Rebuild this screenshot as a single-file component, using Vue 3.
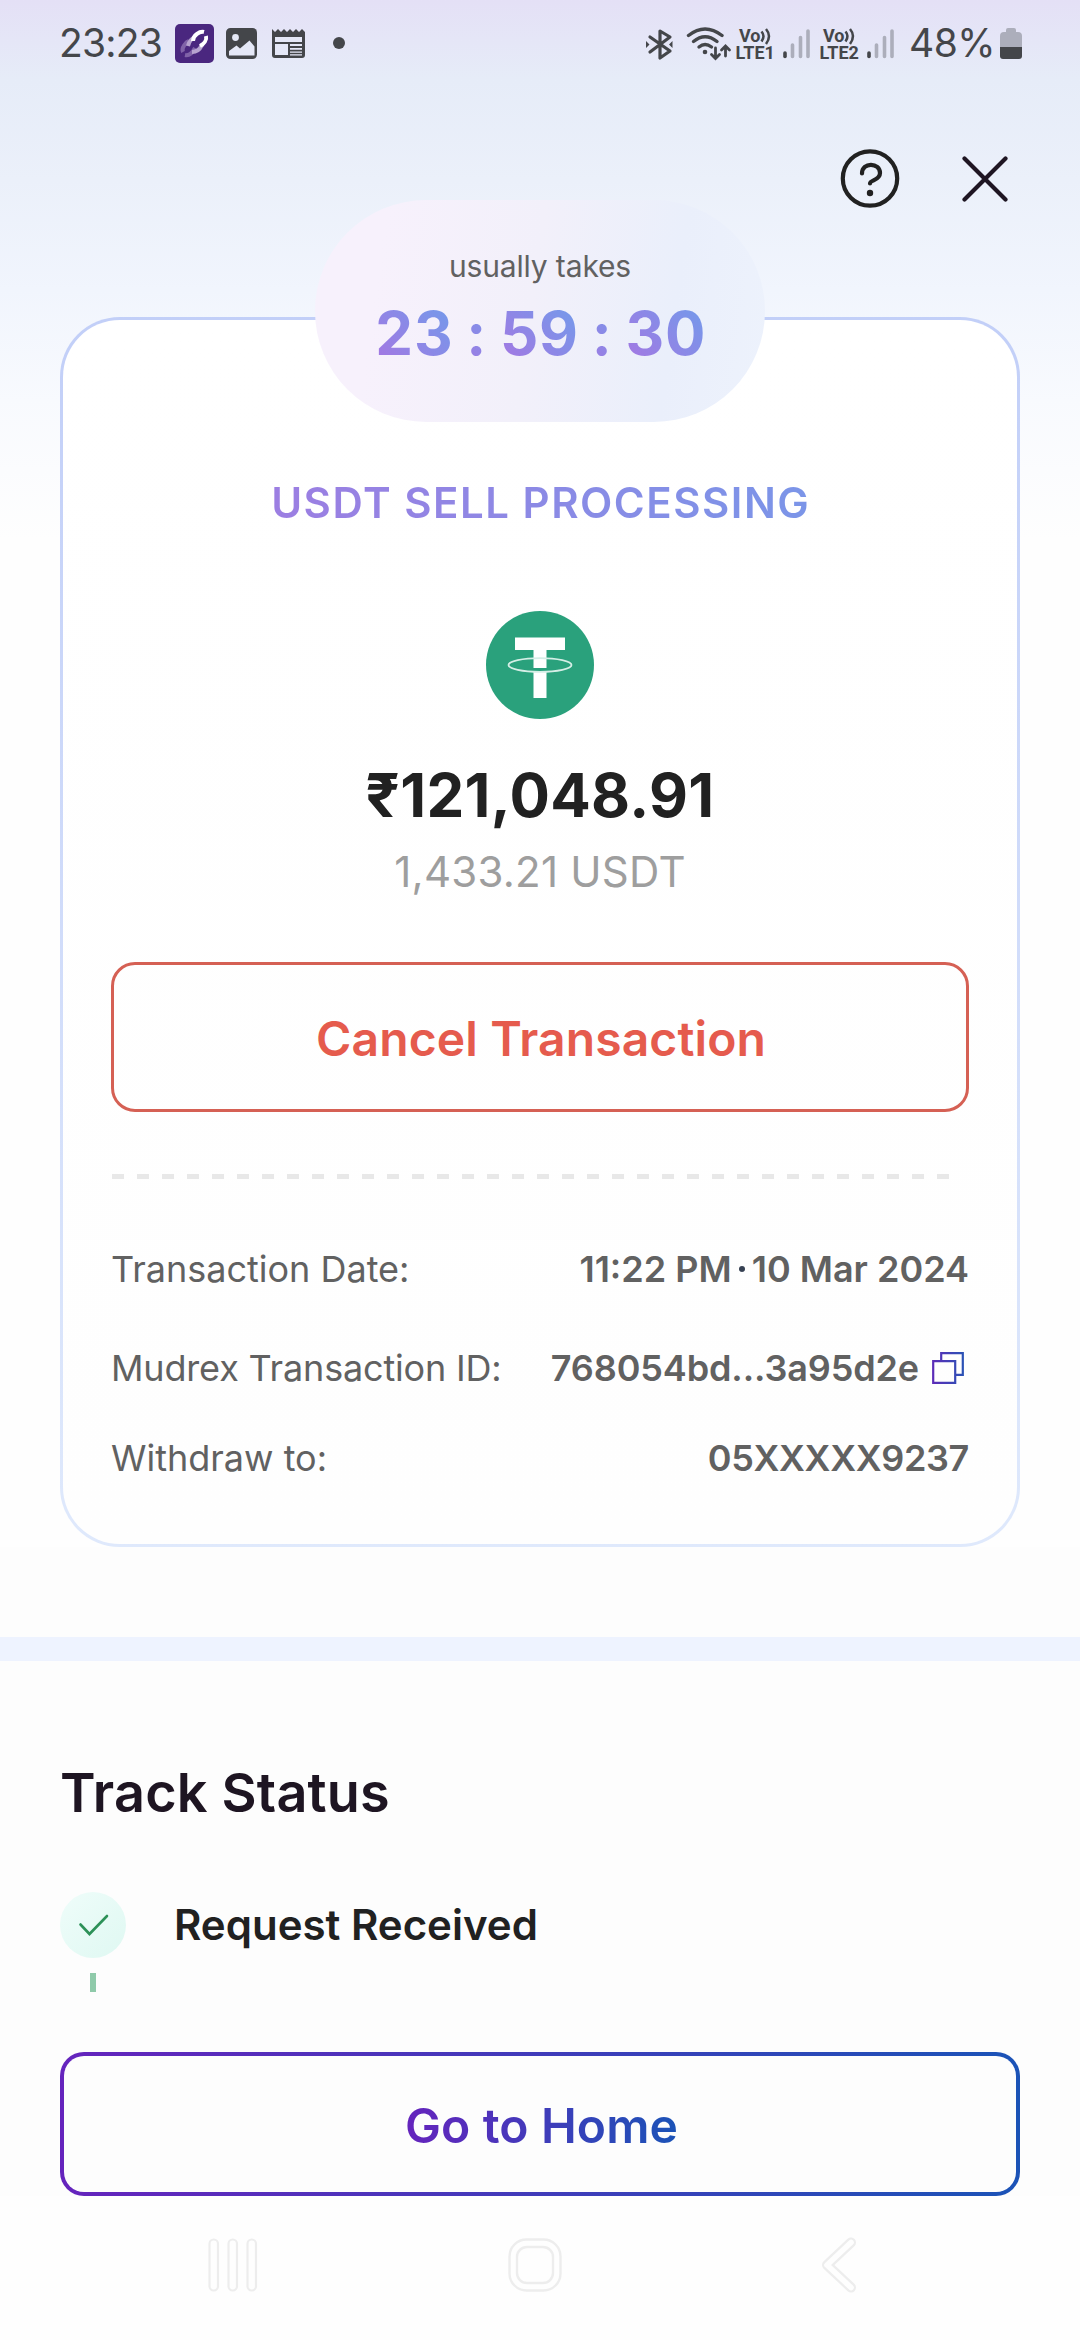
<script setup>
const dashes = 34
const timer = ['23', ':', '59', ':', '30']
</script>

<template>
  <main class="screen">
    <header class="status">
      <span class="clock">23:23</span>
      <svg class="app" width="39" height="39" viewBox="0 0 39 39">
        <rect width="39" height="39" rx="5" fill="#4a277f" />
        <g fill="none" stroke-width="4" stroke-linecap="butt">
          <path d="M8 28 C6 24 11 18 14 17 M10 31 C15 32 18 28 20 24" stroke="#8063a8" />
          <path d="M13 22 C14 17 18 13 20 14 M17 28 C22 28 25 25 27 21" stroke="#b6a3cf" />
          <path d="M18 17 C18 11 25 7 29 8 M31 12 C32 16 29 20 25 22" stroke="#fff" />
        </g>
      </svg>
      <svg class="pic" width="31" height="31" viewBox="0 0 31 31">
        <rect width="31" height="31" rx="4.5" fill="#44464a" />
        <circle cx="9.5" cy="9.5" r="3.4" fill="#e5e8f7" />
        <path d="M3 27.500v-4.500l7.500-5.500 3.500 3 9.500-8 5 6v9z" fill="#e5e8f7" />
      </svg>
      <svg class="news" width="33" height="31" viewBox="0 0 33 31">
        <path d="M0 1l3 3 3-3 3 3 3-3 3 3 3-3 3 3 3-3 3 3 3-3 3 3V27q0 3-3 3H3q-3 0-3-3z" fill="#44464a" />
        <path d="M3 9h27v5H3zM3 16h13v11H3zM18 16h12v2H18zM18 20h12v1.8H18zM18 23.5h12v1.3H18zM18 26.3h12v1.2H18z" fill="#e5e8f7" />
      </svg>
      <i class="more"></i>
      <svg class="radios" width="280" height="36" viewBox="645 26 280 36" fill="none" stroke="#44464a">
        <g stroke-width="3.2" stroke-linecap="round" stroke-linejoin="round">
          <path d="M650 37l20 14-10 7V31l10 6-20 15" />
        </g>
        <path d="M646 41l3.5 3.5-3.5 3.5zM672.500 41l-3.500 3.500 3.500 3.500z" fill="#44464a" stroke="none" />
        <g stroke-width="3.400" stroke-linecap="round">
          <path d="M688.500 35.500Q705 22.500 722 35.500" />
          <path d="M693.500 41.500Q705 32 717 41.500" />
          <path d="M699 47Q705 42 711.500 47" />
          <path d="M715.500 48v10M711.500 54.500l4 4 4-4M725.500 56V46.500M721.500 50l4-4 4 4" stroke-width="2.800" />
        </g>
        <circle cx="705" cy="52" r="2.300" fill="#44464a" stroke="none" />
        <g v-for="(dx, i) in [0, 84]" :key="i" :transform="`translate(${dx} 0)`">
          <text x="739" y="42" class="lte">Vo</text>
          <path d="M761.500 31.500q4 4.500 0 10M766 29q6 7 0 15" stroke-width="2.500" />
          <text x="735.500" y="59" class="lte">LTE{{ i + 1 }}</text>
          <path d="M785 53v3.500" stroke-width="3.600" stroke-linecap="round" />
          <path d="M792.500 45v11.500M800.500 37.500v19M808 31v25.500" stroke="#acaebb" stroke-width="3.600" stroke-linecap="round" />
        </g>
      </svg>
      <span class="pct">48%</span>
      <svg class="battery" width="22" height="32" viewBox="0 0 22 32">
        <path d="M6 4V2q0-2 2-2h6q2 0 2 2v2h2q4 0 4 4v12H0V8q0-4 4-4z" fill="#acaebb" />
        <path d="M0 19h22v9q0 3-3 3H3q-3 0-3-3z" fill="#44464a" />
      </svg>
    </header>

    <nav class="actions">
      <svg width="60" height="60" viewBox="0 0 60 60" fill="none" stroke="#212121" stroke-width="4.200" stroke-linecap="round">
        <circle cx="30" cy="29.500" r="27.200" />
        <path d="M22 24.500C22 12.500 40 13.500 40 24c0 7.500-10 7-10 10.500" />
        <circle cx="30" cy="44" r="3.200" fill="#212121" stroke="none" />
      </svg>
      <svg width="46" height="46" viewBox="0 0 46 46" fill="none" stroke="#1e1522" stroke-width="4.200" stroke-linecap="round">
        <path d="M2.500 2.500l41 41M43.500 2.500l-41 41" />
      </svg>
    </nav>

    <section class="card">
      <div class="pill">
        <p class="takes">usually takes</p>
        <p class="timer">
          <span v-for="(p, i) in timer" :key="i" :class="{ colon: p === ':' }">{{ p }}</span>
        </p>
      </div>
      <h1 class="title">USDT SELL PROCESSING</h1>
      <svg class="coin" width="108" height="108" viewBox="0 0 108 108">
        <circle cx="54" cy="54" r="54" fill="#2aa17c" />
        <path d="M29 26.500h50V39H60.500V57h-13V39H29zM47.500 61h13v26h-13z" fill="#fff" />
        <ellipse cx="54" cy="54" rx="31.500" ry="6.800" fill="none" stroke="#d5eee6" stroke-width="1.800" />
      </svg>
      <p class="amount">₹121,048.91</p>
      <p class="units">1,433.21 USDT</p>
      <button class="cancel">Cancel Transaction</button>
      <div class="dashes"><i v-for="n in dashes" :key="n"></i></div>
      <dl class="details">
        <div class="row">
          <dt>Transaction Date:</dt>
          <dd><span>11:22 PM</span><i class="sep"></i><span>10 Mar 2024</span></dd>
        </div>
        <div class="row">
          <dt class="id-label">Mudrex Transaction ID:</dt>
          <dd class="id-value">
            <span>768054bd...3a95d2e</span>
            <svg class="copy" width="32" height="32" viewBox="0 0 32 32" fill="none" stroke="url(#copyInk)" stroke-width="2.200">
              <defs>
                <linearGradient id="copyInk" x1="0" y1="0" x2="32" y2="0" gradientUnits="userSpaceOnUse">
                  <stop offset="0" stop-color="#5d2bb8" /><stop offset="1" stop-color="#2a53b5" />
                </linearGradient>
              </defs>
              <path d="M1.200 9.200h22v21.600h-22zM9.200 10V1.200h21.600v21.600H23" />
            </svg>
          </dd>
        </div>
        <div class="row">
          <dt>Withdraw to:</dt>
          <dd class="account">05XXXXX9237</dd>
        </div>
      </dl>
    </section>

    <section class="lower">
      <div class="band"></div>
      <h2 class="track">Track Status</h2>
      <div class="step">
        <svg width="66" height="66" viewBox="0 0 66 66">
          <defs>
            <linearGradient id="mint" x1="0" y1="0" x2="1" y2="1">
              <stop offset="0" stop-color="#effdfa" /><stop offset="1" stop-color="#dff8f2" />
            </linearGradient>
          </defs>
          <circle cx="33" cy="33" r="33" fill="url(#mint)" />
          <path d="M20.500 32.500l9 9.500 17.500-18" fill="none" stroke="#2d9158" stroke-width="2.600" stroke-linecap="round" />
        </svg>
        <span>Request Received</span>
      </div>
      <div class="link"></div>
      <button class="home"><span>Go to Home</span></button>
    </section>

    <footer class="sysnav">
      <svg width="50" height="54" viewBox="0 0 50 54" fill="none" stroke="#ededed" stroke-width="2.200">
        <rect x="1.500" y="1.500" width="8.500" height="51" rx="4.250" />
        <rect x="20.500" y="1.500" width="8.500" height="51" rx="4.250" />
        <rect x="39.500" y="1.500" width="8.500" height="51" rx="4.250" />
      </svg>
      <svg class="home-key" width="54" height="54" viewBox="0 0 54 54" fill="none" stroke="#ededed" stroke-width="2.400">
        <rect x="1.500" y="1.500" width="51" height="51" rx="17" />
        <rect x="9" y="9" width="36" height="36" rx="10" />
      </svg>
      <svg class="back-key" width="36" height="56" viewBox="0 0 36 56" fill="none" stroke-linecap="round" stroke-linejoin="round">
        <path d="M30 5.500L6 28l24 22.500" stroke="#ededed" stroke-width="10" />
        <path d="M30 5.500L6 28l24 22.500" stroke="#fefefe" stroke-width="5.600" />
      </svg>
    </footer>
  </main>
</template>

<style>
body { margin: 0; background: #fefefe; }
</style>

<style scoped>
.screen {
  width: 1080px; height: 2340px; overflow: hidden;
  display: flex; flex-direction: column;
  font-family: Inter, "Noto Sans", sans-serif;
  background: linear-gradient(180deg, #e4e0f6 0, #e6ecf8 80px, #ebf0fa 180px, #f1f5fd 290px, #f8fafe 400px, #fefefe 540px);
}
p, h1, h2, dl, dd { margin: 0; }
button { font-family: inherit; padding: 0; margin: 0; }
svg { display: block; flex: none; }
.status { height: 90px; display: flex; align-items: flex-start; flex: none; color: #44464a; }
.clock { margin: 22px 0 0 59px; width: 104px; font-size: 39px; line-height: 42px; letter-spacing: -0.8px; }
.app { margin: 24px 0 0 12px; }
.pic { margin: 28px 0 0 12px; }
.news { margin: 28px 0 0 15px; }
.more { width: 12px; height: 12px; border-radius: 50%; background: #44464a; margin: 37px 0 0 28px; }
.radios { margin: 26px 0 0 300px; }
.lte { font: 700 18px Roboto, sans-serif; fill: #44464a; stroke: none; }
.pct { width: 91px; margin: 22px 0 0 -16px; font-size: 39px; line-height: 42px; letter-spacing: -0.5px; }
.battery { margin-top: 28px; }
.actions { height: 227px; flex: none; display: flex; justify-content: flex-end; gap: 62px; padding: 59px 72px 0 0; box-sizing: border-box; }
.actions svg:last-child { margin-top: 7px; }
.card {
  position: relative; box-sizing: border-box; width: 960px; height: 1230px; flex: none; margin: 0 60px;
  border: 3px solid transparent; border-radius: 60px; padding: 158px 48px 0;
  background: linear-gradient(#fff, #fefefe) padding-box, linear-gradient(#c2cff8, #dfe9fc) border-box;
  display: flex; flex-direction: column; align-items: center;
}
.pill {
  position: absolute; top: -120px; left: 252px; width: 450px; height: 222px; box-sizing: border-box; padding-top: 48px;
  border-radius: 111px; background: linear-gradient(98deg, #f7f1fc 15%, #f2f0fa 48%, #eaeffb 78%, #edf2fc 100%);
  display: flex; flex-direction: column; align-items: center;
}
.takes { font-size: 30px; line-height: 36px; letter-spacing: -0.15px; color: #616161; }
.timer { margin: 19px -1.5px 0 0; display: flex; font-size: 60px; line-height: 60px; font-weight: 700; letter-spacing: 0.8px; }
.timer span { background: linear-gradient(45deg, #a07ae3 10%, #7698ea 90%); -webkit-background-clip: text; background-clip: text; color: transparent; }
.timer .colon { width: 46.5px; text-align: center; }
.title {
  font-size: 42px; line-height: 50px; font-weight: 600; letter-spacing: 1.5px; margin-right: -1.5px;
  background: linear-gradient(90deg, #9c7ee2, #7b95e8); -webkit-background-clip: text; background-clip: text; color: transparent;
}
.coin { margin-top: 83px; }
.amount { margin-top: 40px; font-size: 60px; line-height: 72px; font-weight: 700; letter-spacing: 0.35px; color: #212121; }
.units { margin-top: 16px; font-size: 42px; line-height: 50px; letter-spacing: 0.25px; color: #9e9e9e; }
.cancel { width: 858px; height: 150px; flex: none; margin-top: 65px; padding: 2px 0 0 2px; border: 3px solid #d56054; border-radius: 24px; background: none; font-size: 48px; font-weight: 600; letter-spacing: 0.12px; color: #e55b4d; }
.dashes { align-self: stretch; display: flex; gap: 13px; margin-top: 62px; padding-left: 1px; }
.dashes i { width: 12px; height: 5px; flex: none; background: #e8e8e8; }
.details { align-self: stretch; margin-top: 68px; display: flex; flex-direction: column; font-size: 36px; line-height: 44px; color: #616161; }
.row { display: flex; justify-content: space-between; }
.row + .row { margin-top: 55px; }
.row + .row + .row { margin-top: 46px; }
.id-label { letter-spacing: -0.17px; }
.id-value { letter-spacing: -0.13px; }
.account { letter-spacing: -0.35px; }
dd { font-weight: 600; display: flex; align-items: center; }
.sep { width: 6px; height: 6px; border-radius: 50%; background: #364052; margin: 0 7px; }
.copy { margin: 0 5px 0 13px; }
.lower { flex: none; height: 649px; background: #fdfdfd; padding: 90px 60px 0; box-sizing: border-box; display: flex; flex-direction: column; }
.band { height: 24px; flex: none; margin: 0 -60px; background: #eef3ff; }
.track { margin-top: 100px; font-size: 54px; line-height: 64px; font-weight: 600; letter-spacing: 0.2px; color: #1e1522; }
.step { margin-top: 67px; display: flex; align-items: center; gap: 48px; height: 66px; font-size: 42px; font-weight: 600; color: #212121; }
.step span { padding-bottom: 2px; }
.link { width: 6px; height: 19px; margin: 15px 0 0 30px; background: #8fcaaa; flex: none; }
.home {
  margin-top: 60px; height: 144px; flex: none; padding: 2px 0 0 3px; border: 4px solid transparent; border-radius: 24px; font-size: 48px; font-weight: 600; letter-spacing: 0.15px;
  background: linear-gradient(#fdfdfd, #fdfdfd) padding-box, linear-gradient(90deg, #6524bd, #1b53b7) border-box;
}
.home span { background: linear-gradient(90deg, #6524bd, #1b53b7); -webkit-background-clip: text; background-clip: text; color: transparent; }
.sysnav { flex: 1; background: #fefefe; display: flex; align-items: flex-start; padding: 42px 0 0 208px; }
.home-key { margin-left: 250px; }
.back-key { margin: -1px 0 0 259px; }
</style>
